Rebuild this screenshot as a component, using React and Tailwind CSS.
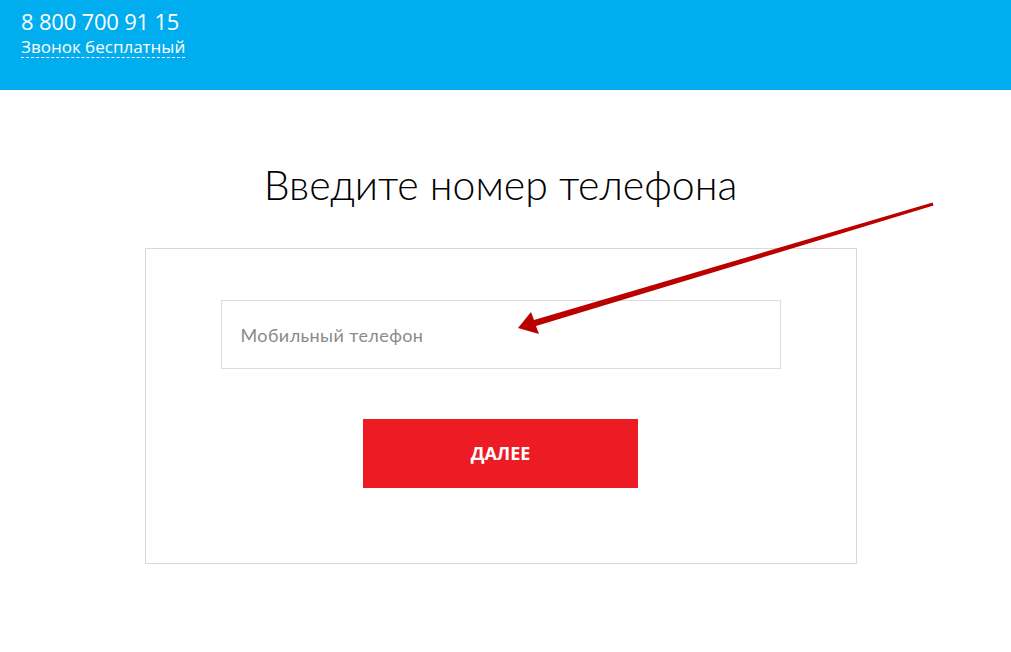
export default function App() {
  return (
    <div className="relative min-h-[652px] bg-white" style={{ fontFamily: "Lato, 'Open Sans', sans-serif" }}>
      <header className="h-[90px] bg-[#00adef] px-[21px] pt-[8px] text-white font-['Open_Sans',sans-serif]">
        <div className="text-[22px] leading-[27px] tracking-[-0.2px]">8 800 700 91 15</div>
        <span className="inline-block border-b border-dashed border-white text-[17px] leading-[20px]">
          Звонок бесплатный
        </span>
      </header>

      <main className="flex flex-col items-center pr-[10px] pt-[67px]">
        <h1 className="text-[41px] font-light leading-[56px] text-black">Введите номер телефона</h1>

        <div className="mt-[35px] flex w-[712px] flex-col items-center border border-[#d9d9dc] px-[75px] pb-[75px] pt-[51px]">
          <input
            type="text"
            placeholder="Мобильный телефон"
            className="h-[69px] w-[560px] border border-[#dcdcdc] px-[19px] text-[18px] tracking-[0.4px] text-[#333] outline-none placeholder:text-[#8a8a8a]"
          />
          <button
            type="button"
            className="mt-[50px] h-[69px] w-[275px] bg-[#ed1c24] text-[18px] font-bold text-white font-['Open_Sans',sans-serif]"
          >
            ДАЛЕЕ
          </button>
        </div>
      </main>

      {/* annotation arrow */}
      <svg className="pointer-events-none absolute left-0 top-0" width="1011" height="652" viewBox="0 0 1011 652">
        <polygon
          fill="#bb0000"
          points="932.6,202.6 933.6,205.6 536,326 539,334 518,328 531,312 534,320"
        />
      </svg>
    </div>
  );
}
